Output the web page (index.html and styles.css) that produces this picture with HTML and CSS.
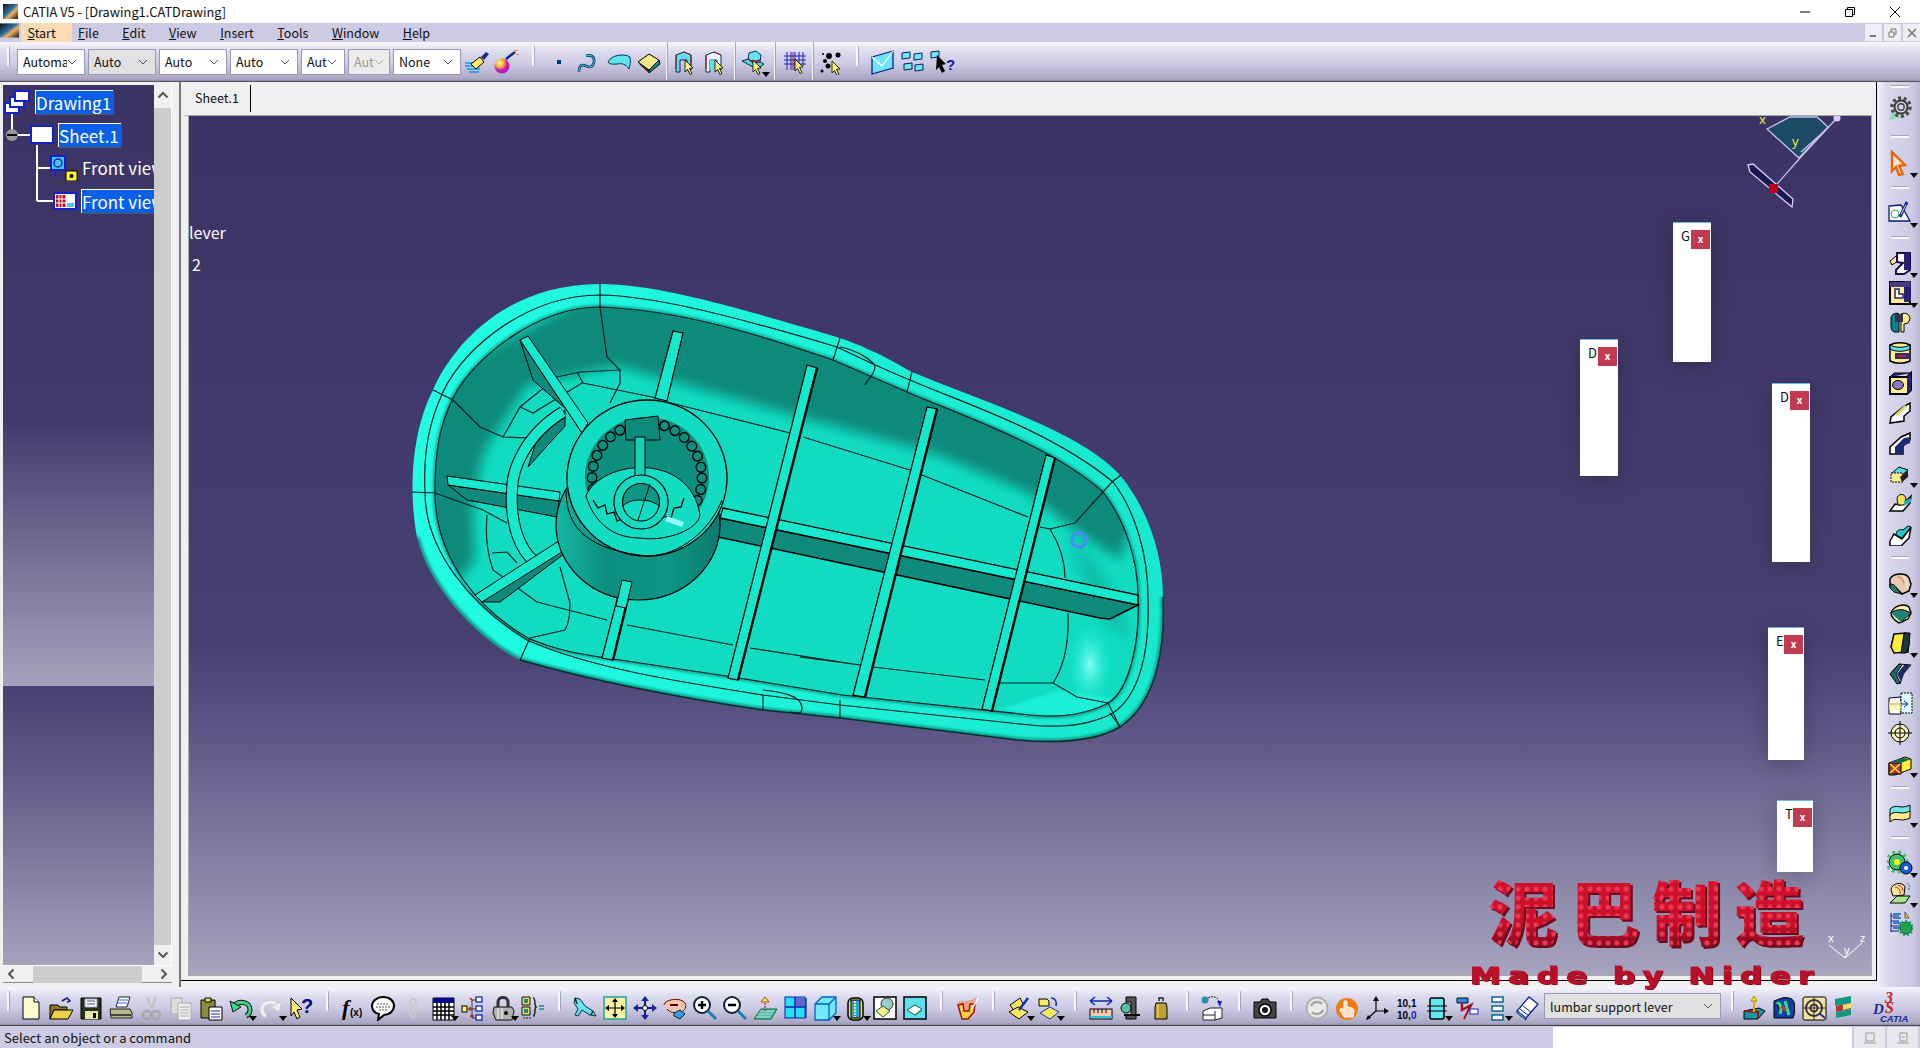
FILE: index.html
```html
<!DOCTYPE html>
<html lang="en">
<head>
<meta charset="utf-8">
<title>CATIA V5 - [Drawing1.CATDrawing]</title>
<link rel="stylesheet" href="styles.css">
</head>
<body>
<svg class="defs" aria-hidden="true">
<defs>
<linearGradient id="logoG" x1="0" y1="0" x2="1" y2="1"><stop offset="0" stop-color="#111"/><stop offset=".45" stop-color="#2c6f9c"/><stop offset=".62" stop-color="#f6b15a"/><stop offset="1" stop-color="#111"/></linearGradient>
<radialGradient id="ballG" cx=".35" cy=".3"><stop offset="0" stop-color="#fff2a0"/><stop offset=".55" stop-color="#f2b52a"/><stop offset="1" stop-color="#c318c0"/></radialGradient>
<linearGradient id="wallG" x1="0" x2="1"><stop offset="0" stop-color="#12b8a4"/><stop offset=".3" stop-color="#0c8f80"/><stop offset=".7" stop-color="#0d9585"/><stop offset="1" stop-color="#0b7a6e"/></linearGradient>
<linearGradient id="bandG" x1="0" y1="0" x2="1" y2="0"><stop offset="0" stop-color="#22fde4"/><stop offset=".5" stop-color="#1cf3d9"/><stop offset="1" stop-color="#17e8ce"/></linearGradient>
<radialGradient id="glowG"><stop offset="0" stop-color="#7ffff2"/><stop offset="1" stop-color="#14ecd2" stop-opacity="0"/></radialGradient>
<filter id="blur6"><feGaussianBlur stdDeviation="6"/></filter>
<filter id="blur2"><feGaussianBlur stdDeviation="1.400"/></filter>
<clipPath id="floorClip"><path d="M600 307C680 310 760 335 833 360L907 392C960 415 1050 445 1103 492C1125 520 1138 560 1138 597C1140 640 1130 690 1108 703C1080 718 1050 717 1030 715L843 695L733 677L607 658C580 654 555 650 528 638C480 610 435 560 435 492C435 450 440 425 453 398C475 355 540 307 600 307Z"/></clipPath>
<clipPath id="bodyClip"><path d="M600 284C650 285 700 296 840 338C880 352 900 366 912 372C960 392 1020 412 1067 437C1090 449 1108 462 1120 475C1145 505 1163 550 1163 597C1165 640 1160 700 1120 727C1090 745 1040 742 1017 740L840 718L763 710C680 698 590 680 520 660C480 640 430 590 417 537C408 490 412 430 433 390C455 340 510 284 600 284Z"/></clipPath>

<g id="cur"><path d="M0 0l8 8-3.500 .5 2.500 5-2 1-2.500-5L0 12z" fill="#ffee70" stroke="#000" stroke-width=".8"/></g>
<g id="brush"><path d="M1 14h13M1 17h15M3 20h13M5 23h10" stroke="#0a9cf0" stroke-width="1.500"/><path d="M7 15l9-7 4 5-8 7z" fill="#ffee66" stroke="#000"/><path d="M17 8l5-5 3 2-5 6z" fill="#103080"/></g>
<g id="ball"><circle cx="8" cy="17" r="7.500" fill="url(#ballG)"/><path d="M12 10l9-7" stroke="#102a80" stroke-width="2.500"/><path d="M20 2l4-1M22 5l3 1" stroke="#f08030"/></g>
<g id="pt"><rect x="11" y="11" width="4" height="4" fill="#003a70"/></g>
<g id="crv"><path d="M3 23c0-7 3-8 7-6s7 1 8-4-3-8-8-6" fill="none" stroke="#003a70" stroke-width="2.600"/><path d="M3 23c0-7 3-8 7-6s7 1 8-4-3-8-8-6" fill="none" stroke="#4fd6e8" stroke-width="1"/></g>
<g id="srf"><path d="M2 13C5 6 18 4 24 8c1 4 0 9-1 12-3-5-8-6-11-5-4 0-8 1-10-2z" fill="#5fe4f0" stroke="#06304a"/></g>
<g id="sld"><path d="M2 13l11-8 10 6-10 10z" fill="#f7e88a" stroke="#000"/><path d="M13 21l10-10 1 4-11 9z" fill="#0f8a8a" stroke="#000"/><path d="M2 13l11 8v3L4 16z" fill="#222"/></g>
<g id="wa"><path d="M4 6l8-3 7 3v15h-4V11h-7v12H4z" fill="#5fdde8" stroke="#063050"/><path d="M12 3l7 3v12M4 6v14" fill="none" stroke="#a01020"/><use href="#cur" x="13" y="11"/></g>
<g id="wb"><path d="M4 6l8-3 7 3v15h-4V11h-7v12H4z" fill="#f4f4ff" stroke="#063050"/><path d="M12 3l7 3M4 6v14" fill="none" stroke="#a01020"/><path d="M8 11h7v10H8z" fill="#5fdde8"/><use href="#cur" x="13" y="11"/></g>
<g id="asy"><path d="M1 12l10-3 12 6-7 5z" fill="#55d6e2" stroke="#063050"/><path d="M8 4l7-2 5 4-1 7-7 1-5-4z" fill="#66e4ee" stroke="#063050"/><path d="M7 10c4 3 8 3 12 1" fill="none" stroke="#a01020" stroke-width="1.500"/><use href="#cur" x="12" y="11"/></g>
<g id="grd"><path d="M5 3v18M9 3v18M13 3v18M17 3v18M21 3v14M2 7h22M2 11h22M2 15h22" stroke="#1a20c0"/><path d="M11 3v18" stroke="#c01020"/><use href="#cur" x="13" y="10"/></g>
<g id="sct"><circle cx="11" cy="7" r="3"/><circle cx="20" cy="6" r="2.500"/><circle cx="7" cy="12" r="2"/><circle cx="10" cy="17" r="2.500"/><circle cx="4" cy="22" r="1.500"/><circle cx="5" cy="5" r="1"/><use href="#cur" x="14" y="12"/></g>
<g id="env"><path d="M2 8l21-6v17L2 25z" fill="#6fe6f2" stroke="#0a1aa8" stroke-width="1.300"/><path d="M2 8l10 9 11-15" fill="none" stroke="#fff" stroke-width="1.200"/></g>
<g id="grp"><g fill="#6fe6f2" stroke="#06206a"><path d="M2 4l8-1v6l-8 1zM14 5l8-1v6l-8 1zM4 15l8-1v6l-8 1zM15 16l8-1v6l-8 1z"/></g></g>
<g id="hlp"><path d="M1 3l8-1v6l-8 1z" fill="#6fe6f2" stroke="#06206a"/><path d="M7 6l9 9-4 1 3 6-3 2-3-6-3 3z"/><text x="16" y="21" class="qm">?</text></g>
<g id="new"><path d="M5 2h11l5 5v17H5z" fill="#fffbd0" stroke="#000"/><path d="M16 2v5h5" fill="#fff" stroke="#000"/></g>
<g id="opn"><path d="M2 10h8l2 2h7v3H6L2 24z" fill="#8c7414" stroke="#000"/><path d="M6 15h19l-5 9H2z" fill="#f1cf45" stroke="#000"/><path d="M14 6l5-3 3 3-3 1" fill="none" stroke="#0e1a80" stroke-width="1.500"/></g>
<g id="sav"><path d="M3 3h20v21H3z" fill="#28301c" stroke="#000"/><path d="M7 4h12v8H7z" fill="#fff" stroke="#9ab"/><path d="M9 6h8M9 9h8" stroke="#44a"/><path d="M7 16h13v8H7z" fill="#e8e8a0"/><rect x="15" y="18" width="3" height="5"/></g>
<g id="prt"><path d="M8 12l3-10h11l-3 10z" fill="#fff" stroke="#223"/><path d="M11 5h9M10 8h9" stroke="#36f"/><path d="M2 14h20l2 4v5H3z" fill="#b8b888" stroke="#222"/><path d="M3 20h20" stroke="#444" stroke-width="2"/></g>
<g id="cut"><path d="M9 2l5 13M18 2l-5 13" stroke="#c4c4c4" stroke-width="2.500"/><circle cx="9" cy="20" r="4" fill="none" stroke="#a8a8a8" stroke-width="2.500"/><circle cx="18" cy="20" r="4" fill="none" stroke="#a8a8a8" stroke-width="2.500"/></g>
<g id="cpy" fill="#ddd" stroke="#aaa"><path d="M3 3h11v16H3z"/><path d="M10 8h13v17H10z" fill="#eee"/><path d="M12 12h9M12 15h9M12 18h9M12 21h9" stroke="#aaa"/></g>
<g id="pst"><path d="M3 5h14v18H3z" fill="#8c8a40" stroke="#000"/><path d="M7 3h6v4H7z" fill="#e8d24a" stroke="#000"/><path d="M11 12h13v13H11z" fill="#fff" stroke="#000"/><path d="M13 16h9M13 19h9M13 22h9" stroke="#22a" /></g>
<g id="und"><path d="M5 12c5-7 17-6 17 3 0 3-2 5-4 6" fill="none" stroke="#111" stroke-width="5"/><path d="M5 12c5-7 17-6 17 3 0 3-2 5-4 6" fill="none" stroke="#42d08a" stroke-width="3"/><path d="M2 6l3 11 8-5z" fill="#42d08a" stroke="#111"/></g>
<g id="red"><path d="M21 12c-5-7-17-6-17 3 0 3 2 5 4 6" fill="none" stroke="#ccc" stroke-width="5"/><path d="M21 12c-5-7-17-6-17 3 0 3 2 5 4 6" fill="none" stroke="#f0f0f6" stroke-width="3"/><path d="M24 6l-3 11-8-5z" fill="#eee" stroke="#ccc"/></g>
<g id="wht"><path d="M3 3l11 11-5 1 3 7-3 2-3-7-3 4z" fill="#ffee70" stroke="#000"/><text x="13" y="18" class="qm big">?</text></g>
<g id="fx"><text x="2" y="20" class="fx">f</text><text x="10" y="21" class="fx2">(x)</text></g>
<g id="bub"><path d="M13 2c7 0 11 4 11 9s-5 9-10 9l-6 5 1-6c-4-1-7-4-7-8 0-5 5-9 11-9z" fill="#fff" stroke="#000" stroke-width="2"/><path d="M7 9h12M6 12h14M9 15h8" stroke="#555" stroke-dasharray="2 1"/></g>
<g id="pwn" fill="none" stroke="#c8c8c8" stroke-width="2"><ellipse cx="13" cy="8" rx="3" ry="4"/><ellipse cx="13" cy="17" rx="3" ry="5"/></g>
<g id="tbl"><path d="M3 3h21v22H3z" fill="#fff" stroke="#000"/><path d="M3 3h21v5H3z" fill="#06088a"/><path d="M3 12h21M3 16h21M3 20h21M7 8v17M11 8v17M15 8v17M19 8v17" stroke="#000" stroke-width="1.500"/></g>
<g id="tre"><g fill="#fff" stroke="#0a28c0" stroke-width="1.300"><rect x="16" y="2" width="6" height="5"/><rect x="16" y="11" width="6" height="5"/><rect x="16" y="20" width="6" height="5"/></g><rect x="2" y="11" width="5" height="6" fill="#ffee70" stroke="#000"/><path d="M7 14h9M12 5v18M12 5h4M12 23h4" stroke="#333"/><path d="M10 3l2 2M10 12v4M10 21h4" stroke="#d01010" stroke-width="1.500"/></g>
<g id="lck"><path d="M8 12V7c0-6 10-6 10 0v5" fill="none" stroke="#333" stroke-width="3"/><path d="M4 12h18l2 4-2 9H6l-3-7z" fill="#b0b0b0" stroke="#111"/><path d="M8 13v11M12 13v11" stroke="#fff"/><circle cx="16" cy="18" r="2"/></g>
<g id="frm"><path d="M2 2h8v8H2zM2 12h8v8H2z" fill="#e8e06a" stroke="#111"/><path d="M4 4h4v4H4zM4 14h4v4H4z" fill="#2a8a78"/><path d="M3 23h2M6 23h2M9 23h2" stroke="#222"/><path d="M13 3c3 0 1 8 3 9-2 1 0 9-3 9" fill="none" stroke="#222" stroke-width="1.500"/><path d="M19 11h5M19 14h5" stroke="#1a8a80" stroke-width="1.500"/></g>
<g id="pln"><path d="M3 3l5 1 5 7 8 5 3 5-6-1-8-5-4 6-3-1 3-6-4-6z" fill="#68e2ee" stroke="#06304a"/><path d="M3 3l2 6M21 16l-2 4" stroke="#222" stroke-width="1.500"/></g>
<g id="fit"><rect x="2" y="2" width="22" height="22" fill="#f8f2a4" stroke="#16a8a0" stroke-width="1.500"/><path d="M13 5v16M5 13h16" stroke="#000" stroke-width="1.200"/><path d="M13 3l3 4h-6zM13 23l3-4h-6zM3 13l4-3v6zM23 13l-4-3v6z"/></g>
<g id="pan"><path d="M13 2v22M2 13h22" stroke="#0a1aa0" stroke-width="2"/><path d="M13 1l4 5H9zM13 25l4-5H9zM1 13l5-4v8zM25 13l-5-4v8z" fill="#1a2a90"/><circle cx="13" cy="13" r="2.500" fill="#fff" stroke="#000"/></g>
<g id="rot"><path d="M2 10c1-6 17-8 21-2 2 3 0 8-4 9-6 2-12 0-14-3" fill="#f4c8b0" stroke="#700" /><path d="M8 10h8" stroke="#400" stroke-width="2"/><path d="M12 18l6-3 5 4-5 5-6-3z" fill="#3aa0d8" stroke="#024"/></g>
<g id="zin"><circle cx="10" cy="10" r="8" fill="#fff" stroke="#123" stroke-width="2"/><path d="M6 10h8M10 6v8" stroke="#000" stroke-width="2.500"/><path d="M16 16l8 8" stroke="#1a7fb0" stroke-width="3"/></g>
<g id="zot"><circle cx="10" cy="10" r="8" fill="#fff" stroke="#123" stroke-width="2"/><path d="M6 10h8" stroke="#000" stroke-width="2.500"/><path d="M16 16l8 8" stroke="#1a7fb0" stroke-width="3"/></g>
<g id="nrm"><path d="M2 24l7-10h16l-6 10z" fill="#5cc0b0" stroke="#063"/><path d="M4 22h14M6 19h14M8 16h14" stroke="#9ee0d0"/><path d="M13 16V4" stroke="#c24" stroke-dasharray="2 1" stroke-width="1.300"/><path d="M13 2l4 5H9z" fill="#ffee70" stroke="#a40"/></g>
<g id="mul"><rect x="5" y="3" width="20" height="20" fill="#5a5aa0"/><rect x="3" y="2" width="20" height="21" fill="#28e0f0" stroke="#0a1ac0"/><path d="M13 2v21M3 12h20" stroke="#0a1ac0" stroke-width="1.500"/><path d="M14 3h8v8h-8z" fill="#6a60c0"/></g>
<g id="cub"><path d="M3 9l7-7h14v16l-7 7H3z" fill="#6feaf6" stroke="#0a5ac8" stroke-width="1.300"/><path d="M3 9h14v16M17 9l7-7" fill="none" stroke="#0a5ac8" stroke-width="1.300"/></g>
<g id="cyl"><rect x="6" y="3" width="15" height="22" rx="5" fill="#eee060" stroke="#000" stroke-width="1.500"/><rect x="9" y="5" width="9" height="18" fill="#28a0f0" stroke="#000"/><path d="M13 6v16" stroke="#fff200" stroke-dasharray="2 1" stroke-width="2"/></g>
<g id="rn1"><rect x="2" y="2" width="22" height="22" fill="#fff" stroke="#000" stroke-width="1.500"/><circle cx="15" cy="9" r="6" fill="#9cc" stroke="#333"/><path d="M4 16l7-5 7 5-7 6z" fill="#f6ee8a" stroke="#163"/></g>
<g id="rn2"><rect x="2" y="2" width="22" height="22" fill="#5fe0f0" stroke="#000" stroke-width="1.500"/><path d="M5 15l8-5 7 4-7 6z" fill="#fff" stroke="#163"/><path d="M13 20l7-6v2l-7 5z" fill="#1a7"/></g>
<g id="mtl"><path d="M3 7l14-2 6-3-3 13-6 10H9l-3-9z" fill="#e8a090"/><path d="M4 10l5-1 1 7h5l1-7h5l-1 8-6 7H8z" fill="#ffd040" stroke="#a01010" stroke-width="1.500"/><path d="M18 14L24 3" stroke="#fff" stroke-width="1.500"/></g>
<g id="shp"><path d="M4 10l10-7 3 6-8 8z" fill="#f8e860" stroke="#000"/><path d="M3 17l9-5 10 5-9 7z" fill="#f8e860" stroke="#000"/><path d="M13 15l9-12" stroke="#1030b0" stroke-width="2.500"/></g>
<g id="shq"><path d="M3 4h8l2 2v5H3z" fill="#f8e860" stroke="#000"/><path d="M4 18l10-6 9 5-9 7z" fill="#f8e860" stroke="#1030b0"/><path d="M15 3c4 0 6 3 5 8" fill="none" stroke="#1030b0" stroke-width="1.500"/></g>
<g id="rul"><path d="M2 6h22M2 6l5-4M2 6l5 4M24 6l-5-4M24 6l-5 4" fill="none" stroke="#0a28b0" stroke-width="1.500"/><rect x="2" y="14" width="22" height="10" fill="#f8c8b0" stroke="#000"/><path d="M2 22h22" stroke="#20c8e0" stroke-width="2"/><path d="M6 14v4M10 14v4M14 14v4M18 14v4" stroke="#000"/></g>
<g id="clm"><path d="M8 2h10v22H8v-4h5V7H8z" fill="#555" stroke="#000"/><circle cx="8" cy="13" r="5" fill="#56c0a0" stroke="#000"/><path d="M6 20h16" stroke="#000" stroke-width="2"/></g>
<g id="wgt"><path d="M11 6V3h4v3" fill="none" stroke="#222" stroke-width="1.500"/><path d="M8 8h10l1 4v12H7V12z" fill="#c0a030" stroke="#000"/><path d="M10 9v14" stroke="#f0e090"/></g>
<g id="kin"><path d="M3 16l7-3 12 0v10l-7 2H3z" fill="#fff" stroke="#222"/><path d="M3 20h12M15 16v9" stroke="#222"/><circle cx="5" cy="5" r="3.500" fill="#2a8aa8"/><path d="M8 3c4-2 9-2 11 3" fill="none" stroke="#222" stroke-dasharray="2 1"/><path d="M17 6l5 0-2 6z" fill="#1a20c0"/></g>
<g id="cam"><path d="M2 7h6l2-3h6l2 3h6v16H2z" fill="#444" stroke="#000"/><circle cx="13" cy="15" r="6" fill="#fff" stroke="#000" stroke-width="1.500"/><circle cx="13" cy="15" r="3" fill="#111"/></g>
<g id="upd"><circle cx="13" cy="13" r="10.500" fill="#eaeaea" stroke="#b0b0b0" stroke-width="2"/><path d="M7 11c2-5 9-5 11-2M19 15c-2 5-9 5-11 2" fill="none" stroke="#a8a8a8" stroke-width="2.500"/></g>
<g id="hnd"><circle cx="13" cy="14" r="11" fill="#f07a10"/><path d="M10 7c0-2 3-2 3 0v5l5 1c3 1 2 5 1 9H10l-4-7c0-2 2-2 4 0z" fill="#fbe0c8" stroke="#fff"/></g>
<g id="axi"><path d="M12 16V3M12 16h11M12 16l-9 8" stroke="#000" stroke-width="1.200"/><path d="M12 1l3 5H9zM25 16l-5-3v6zM2 25l2-5 3 3z" fill="#000"/></g>
<g id="num"><text x="3" y="12" class="nm">10,1</text><text x="3" y="24" class="nm">10,<tspan class="nmb">0</tspan></text></g>
<g id="dsp"><rect x="6" y="3" width="14" height="21" rx="2" fill="#66e6f0" stroke="#000" stroke-width="1.500"/><path d="M3 11h20M3 16h20" stroke="#000"/></g>
<g id="spc"><path d="M3 3h11v5H3z" fill="#2c8ae0" stroke="#111"/><path d="M8 8v7l9-5-3 6" fill="none" stroke="#a01020" stroke-width="2.500"/><path d="M14 16l-4 8" stroke="#a01020" stroke-width="2"/><rect x="16" y="14" width="8" height="5" fill="#fff" stroke="#0a28c0"/></g>
<g id="lay"><g fill="#fff" stroke="#0a6a90" stroke-width="1.500"><rect x="8" y="2" width="11" height="5"/><rect x="8" y="11" width="11" height="5"/><rect x="8" y="20" width="11" height="5"/></g></g>
<g id="bok"><path d="M3 16L15 2l9 7-12 14z" fill="#fff" stroke="#0a2a90" stroke-width="1.300"/><path d="M3 16l9 7v2L3 18zM6 14l9 7M9 11l8 6" fill="#7fd0f0" stroke="#0a2a90"/></g>
<g id="edg"><path d="M3 16l15-3 6 3-7 8H3z" fill="#0f9aa8" stroke="#000"/><path d="M3 16l14 1v7" fill="none" stroke="#a01010" stroke-width="2"/><path d="M13 3v14" stroke="#e8a010" stroke-width="2"/><path d="M13 1l3 5h-6z" fill="#fff000" stroke="#a80"/></g>
<g id="cnt"><path d="M3 6l8-3c5-1 11 0 12 4 1 6 1 12-1 16H3z" fill="#0f3fa0" stroke="#000"/><path d="M6 9c3-3 5 5 3 10M14 6l4 14" stroke="#2ee08a" stroke-width="3"/><path d="M11 11l3 5" stroke="#f02020" stroke-width="3"/></g>
<g id="trg"><rect x="2" y="2" width="23" height="23" rx="2" fill="#f5e2a8" stroke="#000"/><circle cx="13" cy="13" r="8" fill="none" stroke="#333" stroke-width="2"/><circle cx="13" cy="13" r="3.500" fill="none" stroke="#333" stroke-width="2"/><path d="M13 2v23M2 13h23" stroke="#333"/><path d="M18 18l6 5" stroke="#1a30b0" stroke-width="2"/></g>
<g id="lyr"><path d="M4 4l16-3v7L4 11z" fill="#0f9a80"/><path d="M5 11l15-3v6L5 17z" fill="#c03030"/><path d="M5 17l15-3v6L5 23z" fill="#0f9a80"/><path d="M12 10l8-2v5l-8 2z" fill="#f0e070"/></g>
<g id="gear"><path d="M2 26l4-10 9 7z" fill="#8bd8b4"/><circle cx="14" cy="13" r="6.500" fill="#d8d8e8" stroke="#3a3a3a" stroke-width="2"/><circle cx="14" cy="13" r="9" fill="none" stroke="#4a4a4a" stroke-width="3.500" stroke-dasharray="3 2.600"/><circle cx="14" cy="13" r="3.200" fill="none" stroke="#3a3a3a" stroke-width="1.400"/></g>
<g id="arw"><path d="M5 2l13 13-6 1 4 8-4 1-3-8-4 4z" fill="#fbe6c8" stroke="#e8650a" stroke-width="2.400"/></g>
<g id="skt"><path d="M2 6l12-1 9 16H2z" fill="#fff" stroke="#0a1a80" stroke-width="1.300"/><circle cx="8" cy="14" r="4" fill="none" stroke="#2ab060"/><path d="M13 17l7-15" stroke="#1030a0" stroke-width="3"/><path d="M14 14l5-9" stroke="#f0e070"/></g>
<g id="pad"><path d="M3 11l6-5 2 5-6 4z" fill="#ffef90" stroke="#000"/><path d="M10 3h13v17l-6 4H9v-4l7-7-6-1z" fill="#fff" stroke="#160a50" stroke-width="2"/><path d="M17 3h6v17h-6z" fill="#2c1e70"/></g>
<g id="pck"><rect x="3" y="2" width="20" height="22" fill="#ffef90" stroke="#000" stroke-width="2"/><path d="M17 1h7v21h-7z" fill="#2c1e70"/><path d="M3 2h20v5H3z" fill="#4a3a80"/><path d="M8 9v9h8v-4h-4V9z" fill="#fff" stroke="#2c1e70" stroke-width="1.500"/></g>
<g id="shf"><path d="M4 8c0-4 6-6 8-4v18H8c-3 0-4-3-4-6z" fill="#0f7f8a" stroke="#000"/><path d="M14 4c4-2 9 0 9 5l-2 4-4 1v8h-3z" fill="#ffef90" stroke="#000"/><path d="M8 4h8v8H8z" fill="#334"/></g>
<g id="rib"><path d="M3 5c5-3 15-3 20 0v16c-5 3-15 3-20 0z" fill="#ffef90" stroke="#000" stroke-width="1.500"/><path d="M3 5c5 3 15 3 20 0v4c-5 3-15 3-20 0z" fill="#5fe0f0" stroke="#000"/><path d="M8 13h15v6H8z" fill="#3a2a70"/><path d="M11 15h8v2h-8z" fill="#b02020"/></g>
<g id="hol"><path d="M3 7h17l4-4v17l-4 4H3z" fill="#ffef90" stroke="#000" stroke-width="2"/><path d="M20 7l4-4v17l-4 4z" fill="#2c1e70"/><path d="M3 7l4-4h17" fill="#2c1e70" stroke="#000"/><ellipse cx="11" cy="15" rx="5.500" ry="4.500" fill="#8a7ac0" stroke="#000"/></g>
<g id="rb1"><path d="M3 23l1-6 12-10 7-4v8l-6 5v5z" fill="#fff" stroke="#000" stroke-width="1.500"/><path d="M9 15l10-9" stroke="#e0d860" stroke-width="3"/></g>
<g id="rb2"><path d="M3 24v-7L14 7l9-4v7l-7 6v8z" fill="#fff" stroke="#000" stroke-width="1.500"/><path d="M8 17l9-9 6-1v6l-7 3v8h-8z" fill="#1a2a70"/></g>
<g id="mlt"><path d="M4 14l8-7 9 3-8 7z" fill="#56d8e8" stroke="#000"/><rect x="4" y="13" width="12" height="9" fill="#ffef90" stroke="#000" stroke-dasharray="2 1"/><path d="M13 17l8-7v7l-6 5z" fill="#222"/></g>
<g id="lft"><path d="M3 21l5-7 5 1 8-6 3-3-1 7-7 8H4z" fill="#fff" stroke="#000" stroke-width="1.500"/><path d="M10 9c0-5 8-7 9 0l-2 6H11z" fill="#f5e060" stroke="#000"/><path d="M17 11l7-3v4l-7 4z" fill="#28b0b0"/></g>
<g id="swp"><path d="M3 21l4-7 8 5 9-12-2 11-8 8H3z" fill="#fff" stroke="#000" stroke-width="1.500"/><path d="M9 15c0-5 4-6 7-5l5-4 3 1-6 7-3 4z" fill="#28c8c8" stroke="#000"/></g>
<g id="sf1"><path d="M3 9c3-6 16-7 19-1l2 6-2 7-7 3-5-5-7-3z" fill="#e8ccb0" stroke="#000" stroke-width="1.500"/><path d="M3 14c5 0 7 4 7 5l5 5-8-2-4-4z" fill="#2a7a6c" stroke="#000"/><path d="M16 6c3 3 5 8 4 12" fill="none" stroke="#fff"/><path d="M11 7c3 0 5 3 6 6" fill="none" stroke="#d06020"/></g>
<g id="sf2"><path d="M4 13c3-8 14-10 18-6l2 6-3 6-9 4c-5-3-8-6-8-10z" fill="#ffefb0" stroke="#000" stroke-width="1.500"/><path d="M4 13c4-3 9-4 13-3l7 3c-3 4-7 4-9 10" fill="#1f8478" stroke="#000"/></g>
<g id="sf3"><path d="M7 4l12-1 3 6-1 13-14 1-3-6z" fill="#ffef3a" stroke="#000" stroke-width="1.500"/><path d="M17 3h6l-1 13-3 7h-5z" fill="#1a3a3a" stroke="#000"/></g>
<g id="sf4"><path d="M3 14l9-10 12 1-8 9-3 10z" fill="#fff" stroke="#000"/><path d="M3 14l9-10 3 1-6 9 4 9-3 1z" fill="#1a6a72" stroke="#000"/><path d="M10 14l7-9 6 0-6 9-3 8z" fill="#1c2a60"/></g>
<g id="sf5"><path d="M2 8l12-1v17H2z" fill="#fff" stroke="#000"/><path d="M14 3h11v20H14z" fill="#dff" stroke="#000" stroke-dasharray="2 1"/><path d="M3 14h17M17 11l4 3-4 3" fill="none" stroke="#0a1ac0"/><path d="M2 12h12v8H2z" fill="#ffef90" opacity=".7"/></g>
<g id="sf6"><circle cx="13" cy="13" r="9" fill="#f8f4c0" stroke="#000"/><circle cx="13" cy="13" r="5" fill="none" stroke="#000"/><path d="M13 1v24M1 13h24" stroke="#000"/></g>
<g id="sf7"><path d="M2 13l16-6 6 2v10L8 25H2z" fill="#ffef3a" stroke="#000"/><path d="M2 13h12v11H2z" fill="#c03030" stroke="#000"/><path d="M3 14l10 9M13 14L3 23" stroke="#ffef3a" stroke-width="1.500"/><path d="M2 13l14-5 8 1-10 4z" fill="#0e6a50"/></g>
<g id="sf8"><path d="M3 9c6-6 10 1 20-4v7c-10 5-14-2-20 4z" fill="#6fe6ea" stroke="#000"/><path d="M3 15c6-6 10 1 20-4v7c-10 5-14-2-20 4z" fill="#ffef90" stroke="#000"/></g>
<g id="ga1"><circle cx="10" cy="12" r="8" fill="#3ec070" stroke="#000"/><circle cx="10" cy="12" r="10" fill="none" stroke="#3ec070" stroke-width="3" stroke-dasharray="3 3"/><circle cx="10" cy="12" r="3" fill="#ff0"/><circle cx="19" cy="18" r="6" fill="#1a5ad8" stroke="#000"/><circle cx="19" cy="18" r="2" fill="#fff"/></g>
<g id="ga2"><path d="M4 10c0-7 12-9 14-3l-1 8-11 1z" fill="#f9e79a" stroke="#000"/><path d="M8 7c3 0 6 3 5 7M11 5c3 1 5 3 5 6" fill="none" stroke="#c02020"/><path d="M3 23l7-7 13 0-5 7z" fill="#a8e090" stroke="#000"/><path d="M20 3c3 2 3 5 1 8" fill="none" stroke="#1a6fd0" stroke-dasharray="2 1"/></g>
<g id="ga3"><path d="M4 3v19M4 6h8M4 11h8M4 16h8M4 21h8" stroke="#0a1a90"/><path d="M6 4h8M6 8h8M6 13h8M6 18h8" stroke="#0a60c0" stroke-width="1.500"/><circle cx="19" cy="18" r="6" fill="#22a050" stroke="#063"/><circle cx="19" cy="18" r="7" fill="none" stroke="#22a050" stroke-dasharray="2 2" stroke-width="2"/><path d="M18 2v6h4z" fill="#f5e000" stroke="#555"/></g>
</defs>
</svg>

<div class="app">
  <header class="title-bar">
    <svg class="app-logo" viewBox="0 0 16 16"><rect width="16" height="16" fill="url(#logoG)"/></svg>
    <span class="title-text">CATIA V5 - [Drawing1.CATDrawing]</span>
    <div class="win-btns">
      <svg viewBox="0 0 12 12"><path d="M1 6h10" stroke="#000"/></svg>
      <svg viewBox="0 0 12 12"><path d="M1.500 3.500h7v7h-7zM3.500 3.500v-2h7v7h-2" fill="none" stroke="#000"/></svg>
      <svg viewBox="0 0 12 12"><path d="M1 1l10 10M11 1L1 11" stroke="#000"/></svg>
    </div>
  </header>

  <nav class="menu-bar">
    <svg class="menu-logo" viewBox="0 0 19 14"><rect width="19" height="14" fill="url(#logoG)"/></svg>
    <span class="menu-start"><u>S</u>tart</span>
    <span><u>F</u>ile</span><span><u>E</u>dit</span><span><u>V</u>iew</span><span><u>I</u>nsert</span><span><u>T</u>ools</span><span><u>W</u>indow</span><span><u>H</u>elp</span>
    <div class="mdi-btns">
      <span class="mdi"><svg viewBox="0 0 10 10"><path d="M1 8h6" stroke="#777" stroke-width="2"/></svg></span>
      <span class="mdi"><svg viewBox="0 0 10 10"><path d="M1 4h5v5H1zM3 4V1h5v5H6" fill="none" stroke="#777"/></svg></span>
      <span class="mdi"><svg viewBox="0 0 10 10"><path d="M1 1l8 8M9 1L1 9" stroke="#777" stroke-width="1.600"/></svg></span>
    </div>
  </nav>

  <div class="toolbar toolbar-top">
    <i class="handle"></i>
    <div class="combo c68"><span class="clip">Automa</span><svg class="chev" viewBox="0 0 10 6"><path d="M1 1l4 4 4-4" fill="none" stroke="#555"/></svg></div>
    <div class="combo c68 grey"><span>Auto</span><svg class="chev" viewBox="0 0 10 6"><path d="M1 1l4 4 4-4" fill="none" stroke="#555"/></svg></div>
    <div class="combo c68"><span>Auto</span><svg class="chev" viewBox="0 0 10 6"><path d="M1 1l4 4 4-4" fill="none" stroke="#555"/></svg></div>
    <div class="combo c68"><span>Auto</span><svg class="chev" viewBox="0 0 10 6"><path d="M1 1l4 4 4-4" fill="none" stroke="#555"/></svg></div>
    <div class="combo c44"><span>Aut</span><svg class="chev" viewBox="0 0 10 6"><path d="M1 1l4 4 4-4" fill="none" stroke="#555"/></svg></div>
    <div class="combo c42 off"><span>Aut</span><svg class="chev" viewBox="0 0 10 6"><path d="M1 1l4 4 4-4" fill="none" stroke="#aaa"/></svg></div>
    <div class="combo c68 last"><span>None</span><svg class="chev" viewBox="0 0 10 6"><path d="M1 1l4 4 4-4" fill="none" stroke="#555"/></svg></div>
    <span class="tool"><svg viewBox="0 0 26 26"><use href="#brush"/></svg></span>
    <span class="tool"><svg viewBox="0 0 26 26"><use href="#ball"/></svg></span>
    <i class="handle"></i>
    <span class="tool"><svg viewBox="0 0 26 26"><use href="#pt"/></svg></span>
    <span class="tool"><svg viewBox="0 0 26 26"><use href="#crv"/></svg></span>
    <span class="tool"><svg viewBox="0 0 26 26"><use href="#srf"/></svg></span>
    <span class="tool"><svg viewBox="0 0 26 26"><use href="#sld"/></svg></span>
    <i class="thin"></i>
    <span class="tool"><svg viewBox="0 0 26 26"><use href="#wa"/></svg></span>
    <span class="tool"><svg viewBox="0 0 26 26"><use href="#wb"/></svg></span>
    <i class="thin w3"></i>
    <span class="tool dd"><svg viewBox="0 0 26 26"><use href="#asy"/></svg></span>
    <i class="thin w5"></i>
    <span class="tool"><svg viewBox="0 0 26 26"><use href="#grd"/></svg></span>
    <i class="thin"></i>
    <span class="tool"><svg viewBox="0 0 26 26"><use href="#sct"/></svg></span>
    <i class="handle"></i>
    <span class="tool"><svg viewBox="0 0 26 26"><use href="#env"/></svg></span>
    <span class="tool"><svg viewBox="0 0 26 26"><use href="#grp"/></svg></span>
    <span class="tool"><svg viewBox="0 0 26 26"><use href="#hlp"/></svg></span>
  </div>

  <main class="main">
    <aside class="left">
      <div class="tree">
        <svg class="tree-lines" viewBox="0 0 151 150"><path d="M9 25v25M9 50h20M34 60v56M34 83h14M34 116h16" fill="none" stroke="#fff" stroke-width="2"/><circle cx="9" cy="50" r="6" fill="#999"/><path d="M4 50h10" stroke="#000" stroke-width="2"/></svg>
        <div class="node n0"><svg class="n-ic" viewBox="0 0 26 26"><path d="M1 14h14v10H1z" fill="#fff" stroke="#1420d0" stroke-width="2"/><path d="M6 8h14v10H6z" fill="#fff" stroke="#1420d0" stroke-width="2"/><path d="M11 2h14v10H11z" fill="#fff" stroke="#1420d0" stroke-width="2"/></svg><span class="sel">Drawing1</span></div>
        <div class="node n1"><svg class="n-ic" viewBox="0 0 24 20"><rect x="1" y="1" width="22" height="17" fill="#fff" stroke="#1420d0" stroke-width="2"/></svg><span class="sel">Sheet.1</span></div>
        <div class="node n2"><svg class="n-ic" viewBox="0 0 28 26"><rect x="1" y="1" width="14" height="14" fill="#40c8f0" stroke="#1420d0" stroke-width="2"/><circle cx="8" cy="8" r="4" fill="none" stroke="#1420d0" stroke-width="1.500"/><path d="M5 17v4h6" fill="none" stroke="#1420d0"/><rect x="16" y="16" width="11" height="10" fill="#ffff30" stroke="#000"/><circle cx="21.500" cy="21" r="2"/></svg><span class="plain">Front view</span></div>
        <div class="node n3"><svg class="n-ic" viewBox="0 0 24 18"><rect x="1" y="1" width="22" height="16" fill="#fff" stroke="#1420d0" stroke-width="2"/><path d="M3 3h10v12H3z" fill="#c01030"/><path d="M6 3v12M9 3v12M3 7h18M3 11h18M13 3v12M17 3v8" stroke="#fff"/><path d="M14 11h7v4h-7z" fill="#48c8f8"/></svg><span class="sel">Front view</span></div>
      </div>
      <div class="vscroll">
        <svg class="sarrow" viewBox="0 0 12 8"><path d="M1.500 6.500L6 2l4.500 4.500" fill="none" stroke="#555" stroke-width="2"/></svg>
        <div class="vthumb"></div>
        <svg class="sarrow" viewBox="0 0 12 8"><path d="M1.500 1.500L6 6l4.500-4.500" fill="none" stroke="#555" stroke-width="2"/></svg>
      </div>
      <div class="hscroll">
        <svg class="sarrow-h" viewBox="0 0 8 12"><path d="M6.500 1.500L2 6l4.500 4.500" fill="none" stroke="#555" stroke-width="2"/></svg>
        <div class="hthumb"></div>
        <svg class="sarrow-h" viewBox="0 0 8 12"><path d="M1.500 1.500L6 6l-4.500 4.500" fill="none" stroke="#555" stroke-width="2"/></svg>
      </div>
    </aside>

    <section class="center">
      <div class="tabs"><span class="tab">Sheet.1</span></div>
      <div class="canvas">
        <svg class="scene" viewBox="189 116 1682 859">
          <!-- body -->
          <path d="M600 284C650 285 700 296 840 338C880 352 900 366 912 372C960 392 1020 412 1067 437C1090 449 1108 462 1120 475C1145 505 1163 550 1163 597C1165 640 1160 700 1120 727C1090 745 1040 742 1017 740L840 718L763 710C680 698 590 680 520 660C480 640 430 590 417 537C408 490 412 430 433 390C455 340 510 284 600 284Z" fill="url(#bandG)"/>
          <g clip-path="url(#bodyClip)">
            <path d="M1163 597C1165 640 1160 700 1120 727C1090 745 1040 742 1017 740L840 718L763 710C680 698 590 680 520 660C480 640 430 590 417 537" fill="none" stroke="#0c8f80" stroke-width="5" filter="url(#blur2)"/>
            <path d="M600 307C680 310 760 335 833 360L907 392C960 415 1050 445 1103 492C1125 520 1138 560 1138 597C1140 640 1130 690 1108 703C1080 718 1050 717 1030 715L843 695L733 677L607 658C580 654 555 650 528 638C480 610 435 560 435 492C435 450 440 425 453 398C475 355 540 307 600 307Z" fill="#0c9c8c" stroke="#0b9a8a" stroke-width="4" filter="url(#blur2)"/>
          </g>
          <path d="M1163 597C1165 640 1160 700 1120 727C1090 745 1040 742 1017 740L840 718L763 710C680 698 590 680 520 660" fill="none" stroke="#06302c" stroke-width="1.500"/>
          <g clip-path="url(#floorClip)">
            <rect x="420" y="290" width="740" height="440" fill="#11dcc2"/>
            <path d="M425 620L475 560L472 500L485 450L527 385L617 366L800 417L933 453L1027 492L1075 530L1120 560L1150 470L1000 380L600 290L430 380Z" fill="#0d8a7c" filter="url(#blur6)"/>
            <path d="M1070 530C1095 560 1120 590 1130 640L1100 620L1075 560Z" fill="#10c0aa" filter="url(#blur6)"/>
            <ellipse cx="1090" cy="665" rx="22" ry="42" fill="url(#glowG)"/>
            <path d="M1000 710L1060 690L1120 700L1100 720Z" fill="#1cf0d8" filter="url(#blur2)"/>
          </g>

          <!-- rim lines -->
          <g fill="none" stroke="#04201e" stroke-width="1.200">
            <path d="M600 295C650 296 720 312 837 347C860 358 890 372 910 380C960 402 1050 430 1113 482C1135 510 1148 555 1148 597C1150 650 1140 695 1113 713C1085 728 1050 727 1030 725L840 705L763 695C680 682 590 668 527 640C470 605 425 550 425 492C423 450 430 420 443 392C465 345 530 295 600 295Z"/>
            <path d="M600 307C680 310 760 335 833 360L907 392C960 415 1050 445 1103 492C1125 520 1138 560 1138 597C1140 640 1130 690 1108 703C1080 718 1050 717 1030 715L843 695L733 677L607 658C580 654 555 650 528 638C480 610 435 560 435 492C435 450 440 425 453 398C475 355 540 307 600 307Z"/>
            <path d="M600 284V307L607 357L620 370L620 383L610 403"/>
            <path d="M433 390L453 400L480 427L503 437L527 438"/>
            <path d="M503 437L520 407L557 377L580 372L620 370M520 407L533 413L582 383M577 372L583 383L657 398M667 402L790 433M803 437L910 470M922 475L1028 517"/>
            <path d="M1040 527L1050 529L1075 523L1112 482L1121 475M1050 529C1060 545 1065 560 1065 578"/>
            <path d="M1068 613C1069 640 1065 665 1053 683L1000 683M1053 683L1077 697L1108 703L1120 727"/>
            <path d="M800 657L860 665M873 667L985 680M537 602L607 620M627 625L733 645M750 648L860 665"/>
            <path d="M412 492L435 493L483 510L507 523M487 515C485 540 488 555 493 570L537 602M492 553L507 552L517 563"/>
            <path d="M560 567L570 603C570 615 568 625 565 630L530 638L520 660"/>
            <path d="M840 338L833 360M912 372L907 392M840 347C855 350 870 358 875 366C875 375 868 378 865 385M1110 713L1120 727"/>
            <path d="M763 695V710M763 690C780 692 802 695 802 708C802 716 795 712 790 712M840 700V718"/>
          </g>

          <!-- long rib -->
          <path d="M720 518L1138 605L1110 619L1100 618L718 537Z" fill="#0d8a7c" stroke="#000" stroke-width="1.500"/>
          <path d="M723 508L1138 595V605L720 518Z" fill="#16e8cd" stroke="#000" stroke-width="1.300"/>

          <!-- cross ribs -->
          <g fill="#16e8cd" stroke="#000" stroke-width="1.200">
            <path d="M807 365L817 368L738 680L728 678Z"/>
            <path d="M927 407L937 409L865 697L853 695Z"/>
            <path d="M1046 455L1055 458L992 711L982 709Z"/>
            <path d="M673 331L683 333L667 401L655 398Z"/>
            <path d="M622 580L632 582L613 660L602 658Z"/>
          </g>
          <g fill="none" stroke="#000" stroke-width="2.400">
            <path d="M817 368L738 680M937 409L865 697M1055 458L992 711M632 582L613 660"/>
          </g>

          <!-- left ribs -->
          <path d="M520 340L533 380L567 410L582 433Z" fill="#0d8a7c" stroke="#000"/>
          <path d="M520 340L528 336L588 423L582 433Z" fill="#16e8cd" stroke="#000"/>
          <path d="M448 485L467 500L510 508L557 517L559 501Z" fill="#0d8a7c" stroke="#000"/>
          <path d="M447 476L560 492L559 501L448 485Z" fill="#16e8cd" stroke="#000"/>
          <path d="M565 410L565 426L528 467L540 430Z" fill="#0d8a7c" stroke="#000"/>
          <path d="M563 412C525 435 512 470 512 490C510 525 520 550 535 562" fill="none" stroke="#000" stroke-width="12"/>
          <path d="M563 412C525 435 512 470 512 490C510 525 520 550 535 562" fill="none" stroke="#16e8cd" stroke-width="10"/>
          <path d="M482 602L500 602L572 548L568 535Z" fill="#0d8a7c" stroke="#000"/>
          <path d="M475 595L482 602L573 545L568 535Z" fill="#16e8cd" stroke="#000"/>

          <!-- hub -->
          <ellipse cx="638" cy="525" rx="82" ry="75" fill="url(#wallG)" stroke="#000" stroke-width="1.200"/>
          <path d="M622 580L632 582L626 608L616 606Z" fill="#16e8cd" stroke="#000"/>
          <ellipse cx="647" cy="478" rx="80" ry="78" fill="#12dcc2" stroke="#000" stroke-width="1.300"/>
          <path d="M566 490C566 530 590 550 647 556C680 556 710 530 722 500" fill="none" stroke="#000" stroke-width="1"/>
          <ellipse cx="647" cy="477" rx="62" ry="60" fill="#0d8f80"/>
          <circle cx="647" cy="478" r="55" fill="none" stroke="#000" stroke-width="11" stroke-linecap="round" stroke-dasharray=".1 11.420"/>
          <circle cx="647" cy="478" r="55" fill="none" stroke="#0d8f80" stroke-width="8" stroke-linecap="round" stroke-dasharray=".1 11.420"/>
          <path d="M586 496C600 460 690 450 700 515C698 530 665 542 640 538C615 538 595 525 586 496Z" fill="#12dcc2" stroke="#000"/>
          <path d="M593 500l5 8 7-3 2 9 7-2 3 9 7-3 5 8 7-6 7 7 7-6 7 3 6-8 8 2 3-10 7-1 3-9" fill="none" stroke="#000" stroke-width="1.300"/>
          <path d="M625 420L658 416L660 440L626 440Z" fill="#0d8a7c" stroke="#000"/>
          <path d="M635 437H645V478H635Z" fill="#16d0b8" stroke="#000"/>
          <path d="M667 516L684 522L682 527L665 521Z" fill="#8ffaff"/>
          <circle cx="641" cy="502" r="27" fill="#12dcc2" stroke="#000" stroke-width="1.200"/>
          <circle cx="641" cy="502" r="18.500" fill="#0d9686" stroke="#000" stroke-width="1.200"/>
          <path d="M623 506C630 498 650 498 659 506C657 515 650 521 641 521C632 521 625 515 623 506Z" fill="#12dcc2" stroke="#000"/>
          <path d="M650 484L638 520" stroke="#000"/>

          <!-- busy ring -->
          <circle cx="1079" cy="540" r="7" fill="none" stroke="#3f90f0" stroke-width="3.500"/>

          <!-- compass -->
          <path d="M1767 129L1790 117H1817L1828 127L1799 158Z" fill="#1d4a64" stroke="#c9c4ee" stroke-width="1.300"/>
          <path d="M1837 118L1800 158L1777 184M1829 127L1801 152" fill="none" stroke="#c9c4ee" stroke-width="1.300"/>
          <circle cx="1837" cy="118" r="3.500" fill="#d8d0f8"/>
          <path d="M1748 165L1753 164L1793 199L1792 207L1750 172Z" fill="#1a1650" stroke="#d8d0f8" stroke-width="1.300"/>
          <rect x="1769" y="184" width="9" height="9" fill="#c00018"/>
          <text x="1759" y="124" class="gz">x</text>
          <text x="1792" y="146" class="gz">y</text>

          <!-- axis triad -->
          <path d="M1829 945L1845 958L1862 943" fill="none" stroke="#fff"/>
          <text x="1828" y="942" class="ax">x</text>
          <text x="1844" y="954" class="ax">y</text>
          <text x="1860" y="942" class="ax">z</text>
        </svg>
        <span class="cut-label l1">lever</span>
        <span class="cut-label l2">2</span>
        <div class="card card-g"><span class="card-l">G</span><span class="card-x">x</span></div>
        <div class="card card-d1"><span class="card-l">D</span><span class="card-x">x</span></div>
        <div class="card card-d2"><span class="card-l">D</span><span class="card-x">x</span></div>
        <div class="card card-e"><span class="card-l">E</span><span class="card-x">x</span></div>
        <div class="card card-t"><span class="card-l">T</span><span class="card-x">x</span></div>
      </div>
    </section>

    <aside class="rightbar">
      <i class="rsep first"></i>
      <span class="rtool"><svg viewBox="0 0 26 26"><use href="#gear"/></svg></span>
      <i class="rsep tall"></i>
      <span class="rtool dd"><svg viewBox="0 0 26 26"><use href="#arw"/></svg></span>
      <i class="rsep"></i>
      <span class="rtool dd"><svg viewBox="0 0 26 26"><use href="#skt"/></svg></span>
      <i class="rsep"></i>
      <span class="rtool dd"><svg viewBox="0 0 26 26"><use href="#pad"/></svg></span>
      <span class="rtool dd"><svg viewBox="0 0 26 26"><use href="#pck"/></svg></span>
      <span class="rtool"><svg viewBox="0 0 26 26"><use href="#shf"/></svg></span>
      <span class="rtool"><svg viewBox="0 0 26 26"><use href="#rib"/></svg></span>
      <span class="rtool"><svg viewBox="0 0 26 26"><use href="#hol"/></svg></span>
      <span class="rtool"><svg viewBox="0 0 26 26"><use href="#rb1"/></svg></span>
      <span class="rtool"><svg viewBox="0 0 26 26"><use href="#rb2"/></svg></span>
      <span class="rtool dd"><svg viewBox="0 0 26 26"><use href="#mlt"/></svg></span>
      <span class="rtool"><svg viewBox="0 0 26 26"><use href="#lft"/></svg></span>
      <span class="rtool"><svg viewBox="0 0 26 26"><use href="#swp"/></svg></span>
      <i class="rsep"></i>
      <span class="rtool dd"><svg viewBox="0 0 26 26"><use href="#sf1"/></svg></span>
      <span class="rtool"><svg viewBox="0 0 26 26"><use href="#sf2"/></svg></span>
      <span class="rtool dd"><svg viewBox="0 0 26 26"><use href="#sf3"/></svg></span>
      <span class="rtool"><svg viewBox="0 0 26 26"><use href="#sf4"/></svg></span>
      <span class="rtool"><svg viewBox="0 0 26 26"><use href="#sf5"/></svg></span>
      <span class="rtool"><svg viewBox="0 0 26 26"><use href="#sf6"/></svg></span>
      <span class="rtool dd"><svg viewBox="0 0 26 26"><use href="#sf7"/></svg></span>
      <i class="rsep"></i>
      <span class="rtool dd"><svg viewBox="0 0 26 26"><use href="#sf8"/></svg></span>
      <i class="rsep"></i>
      <span class="rtool dd"><svg viewBox="0 0 26 26"><use href="#ga1"/></svg></span>
      <span class="rtool dd"><svg viewBox="0 0 26 26"><use href="#ga2"/></svg></span>
      <span class="rtool"><svg viewBox="0 0 26 26"><use href="#ga3"/></svg></span>
    </aside>
  </main>

  <div class="toolbar toolbar-bottom">
    <i class="handle"></i>
    <span class="tool"><svg viewBox="0 0 26 26"><use href="#new"/></svg></span>
    <span class="tool"><svg viewBox="0 0 26 26"><use href="#opn"/></svg></span>
    <span class="tool"><svg viewBox="0 0 26 26"><use href="#sav"/></svg></span>
    <span class="tool"><svg viewBox="0 0 26 26"><use href="#prt"/></svg></span>
    <span class="tool"><svg viewBox="0 0 26 26"><use href="#cut"/></svg></span>
    <span class="tool"><svg viewBox="0 0 26 26"><use href="#cpy"/></svg></span>
    <span class="tool"><svg viewBox="0 0 26 26"><use href="#pst"/></svg></span>
    <span class="tool dd"><svg viewBox="0 0 26 26"><use href="#und"/></svg></span>
    <span class="tool dd"><svg viewBox="0 0 26 26"><use href="#red"/></svg></span>
    <span class="tool"><svg viewBox="0 0 26 26"><use href="#wht"/></svg></span>
    <i class="handle"></i>
    <span class="tool"><svg viewBox="0 0 26 26"><use href="#fx"/></svg></span>
    <span class="tool"><svg viewBox="0 0 26 26"><use href="#bub"/></svg></span>
    <span class="tool"><svg viewBox="0 0 26 26"><use href="#pwn"/></svg></span>
    <span class="tool dd"><svg viewBox="0 0 26 26"><use href="#tbl"/></svg></span>
    <span class="tool"><svg viewBox="0 0 26 26"><use href="#tre"/></svg></span>
    <span class="tool dd"><svg viewBox="0 0 26 26"><use href="#lck"/></svg></span>
    <span class="tool"><svg viewBox="0 0 26 26"><use href="#frm"/></svg></span>
    <i class="handle"></i>
    <span class="tool"><svg viewBox="0 0 26 26"><use href="#pln"/></svg></span>
    <span class="tool"><svg viewBox="0 0 26 26"><use href="#fit"/></svg></span>
    <span class="tool"><svg viewBox="0 0 26 26"><use href="#pan"/></svg></span>
    <span class="tool"><svg viewBox="0 0 26 26"><use href="#rot"/></svg></span>
    <span class="tool"><svg viewBox="0 0 26 26"><use href="#zin"/></svg></span>
    <span class="tool"><svg viewBox="0 0 26 26"><use href="#zot"/></svg></span>
    <span class="tool"><svg viewBox="0 0 26 26"><use href="#nrm"/></svg></span>
    <span class="tool"><svg viewBox="0 0 26 26"><use href="#mul"/></svg></span>
    <span class="tool dd"><svg viewBox="0 0 26 26"><use href="#cub"/></svg></span>
    <span class="tool dd"><svg viewBox="0 0 26 26"><use href="#cyl"/></svg></span>
    <span class="tool"><svg viewBox="0 0 26 26"><use href="#rn1"/></svg></span>
    <span class="tool"><svg viewBox="0 0 26 26"><use href="#rn2"/></svg></span>
    <i class="handle"></i>
    <span class="tool"><svg viewBox="0 0 26 26"><use href="#mtl"/></svg></span>
    <i class="handle"></i>
    <span class="tool dd"><svg viewBox="0 0 26 26"><use href="#shp"/></svg></span>
    <span class="tool dd"><svg viewBox="0 0 26 26"><use href="#shq"/></svg></span>
    <i class="handle"></i>
    <span class="tool"><svg viewBox="0 0 26 26"><use href="#rul"/></svg></span>
    <span class="tool"><svg viewBox="0 0 26 26"><use href="#clm"/></svg></span>
    <span class="tool"><svg viewBox="0 0 26 26"><use href="#wgt"/></svg></span>
    <i class="handle"></i>
    <span class="tool"><svg viewBox="0 0 26 26"><use href="#kin"/></svg></span>
    <i class="handle"></i>
    <span class="tool"><svg viewBox="0 0 26 26"><use href="#cam"/></svg></span>
    <i class="handle"></i>
    <span class="tool"><svg viewBox="0 0 26 26"><use href="#upd"/></svg></span>
    <span class="tool"><svg viewBox="0 0 26 26"><use href="#hnd"/></svg></span>
    <span class="tool"><svg viewBox="0 0 26 26"><use href="#axi"/></svg></span>
    <span class="tool"><svg viewBox="0 0 26 26"><use href="#num"/></svg></span>
    <span class="tool dd"><svg viewBox="0 0 26 26"><use href="#dsp"/></svg></span>
    <span class="tool"><svg viewBox="0 0 26 26"><use href="#spc"/></svg></span>
    <span class="tool dd"><svg viewBox="0 0 26 26"><use href="#lay"/></svg></span>
    <span class="tool"><svg viewBox="0 0 26 26"><use href="#bok"/></svg></span>
    <div class="combo c177 grey"><span>lumbar support lever</span><svg class="chev" viewBox="0 0 10 6"><path d="M1 1l4 4 4-4" fill="none" stroke="#555"/></svg></div>
    <i class="handle after-combo"></i>
    <span class="tool"><svg viewBox="0 0 26 26"><use href="#edg"/></svg></span>
    <span class="tool"><svg viewBox="0 0 26 26"><use href="#cnt"/></svg></span>
    <span class="tool"><svg viewBox="0 0 26 26"><use href="#trg"/></svg></span>
    <span class="tool"><svg viewBox="0 0 26 26"><use href="#lyr"/></svg></span>
    <svg class="catia" viewBox="0 0 46 36"><text x="14" y="15" class="ds-3">3</text><text x="2" y="26" class="ds-d">D</text><text x="14" y="25" class="ds-s">S</text><text x="9" y="34" class="ds-c">CATIA</text></svg>
  </div>

  <footer class="status">
    <span class="status-text">Select an object or a command</span>
    <div class="status-input"></div>
    <span class="status-btn"><svg viewBox="0 0 14 14"><path d="M3 2h8v8H3zM1 12h12" fill="none" stroke="#999"/></svg></span>
    <span class="status-btn"><svg viewBox="0 0 14 14"><path d="M4 2h7v8H4zM1 12h12M6 6h3" fill="none" stroke="#999"/></svg></span>
  </footer>

  <div class="wm-cn">泥巴制造</div>
  <div class="wm-en">Made by Nider</div>
</div>
</body>
</html>
```
FILE: styles.css
```css
* { box-sizing: border-box; }
html, body { margin: 0; padding: 0; }
body { width: 1920px; height: 1048px; overflow: hidden; background: #f0f0f0; font-family: "Noto Sans CJK SC", "Noto Sans", sans-serif; color: #111; }
i { display: block; }
.defs { position: absolute; width: 0; height: 0; }

.app { position: relative; width: 1920px; height: 1048px; display: flex; flex-direction: column; overflow: hidden; }

/* title */
.title-bar { height: 23px; flex: none; display: flex; align-items: center; background: #fff; font-size: 12.800px; padding-left: 3px; }
.app-logo { width: 15px; height: 15px; margin-right: 5px; }
.title-text { white-space: nowrap; }
.win-btns { margin-left: auto; display: flex; gap: 33px; padding-right: 19px; }
.win-btns svg { width: 12px; height: 12px; display: block; }

/* menu */
.menu-bar { height: 19px; flex: none; display: flex; align-items: center; gap: 23.500px; background: #cdcbe4; font-size: 12.500px; line-height: 19px; }
.menu-logo { width: 19px; height: 15px; margin-right: -22px; align-self: flex-start; }
.menu-start { background: #fbdcb5; width: 51px; padding-left: 7px; margin-right: -17px; }
.mdi-btns { margin-left: auto; display: flex; gap: 2px; }
.mdi { width: 17px; height: 17px; background: #eeeef4; display: flex; align-items: center; justify-content: center; }
.mdi svg { width: 10px; height: 10px; }

/* toolbars */
.toolbar { flex: none; display: flex; align-items: center; background: linear-gradient(180deg, #f6f6fb 0%, #dcdbee 25%, #cdcbe4 55%, #a9a7c3 95%, #8c8aa6 100%); }
.toolbar-top { height: 39px; padding-left: 0; }
.toolbar-bottom { height: 39px; border-bottom: 1px solid #444; }
.toolbar-bottom .tool { padding-top: 3px; }
.handle { width: 2px; height: 20px; margin: 0 10px; background: #f7f7fc; border-radius: 1px; box-shadow: 1px 0 0 #a5a3bf; flex: none; align-self: flex-start; margin-top: 4px; }
.toolbar-top > .handle:first-child { margin: 4px 8px 0 7px; }
.toolbar-bottom > .handle:first-child { margin: 4px 7px 0 7px; }
.handle.after-combo { margin: 4px 6px 0 10px; }
.thin { width: 2px; height: 38px; margin: 0 2px; background: #f4f4fa; border-right: 1px solid #a5a3bf; flex: none; align-self: flex-start; }
.thin.w3 { margin: 0 3px 0 4px; }
.thin.w5 { margin: 0 4px 0 5px; }
.tool { position: relative; flex: none; width: 30px; height: 38px; display: flex; align-items: center; justify-content: center; }
.tool svg { width: 26px; height: 26px; display: block; }
.dd::after { content: ""; position: absolute; right: -1px; bottom: 4px; border: 4px solid transparent; border-top: 5px solid #000; border-bottom: 0; }

.combo { flex: none; height: 26px; background: #fff; border: 1px solid #9a98b4; margin-right: 3px; display: flex; align-items: center; justify-content: space-between; padding: 0 7px 0 5px; font-size: 12.500px; overflow: hidden; }
.combo .clip { width: 44px; overflow: hidden; white-space: nowrap; }
.combo.last { margin-right: 1px; }
.c68 { width: 68px; }
.c44 { width: 44px; }
.c42 { width: 42px; }
.c177 { width: 177px; margin: 0 0 0 2px; }
.grey { background: #e1e1e1; }
.off { background: #ececec; color: #999; }
.chev { width: 10px; height: 6px; flex: none; }

/* main */
.main { height: 906px; flex: none; display: flex; border-top: 1px solid #555; background: #f0f0f0; }

.left { position: relative; width: 181px; flex: none; display: grid; grid-template-columns: 151px 18px; grid-template-rows: 880px 18px; padding: 3px 0 0 3px; border-right: 2px solid #777; background: #f0f0f0; align-content: start; }
.tree { position: relative; overflow: hidden; background: linear-gradient(180deg, #3a3363 0, #433a6c 335px, #a5a2bd 601px, #4a4172 601px, #5e5684 680px, #a5a2bd 880px); padding: 0 0 0 1px; color: #fff; font-size: 17px; }
.tree-lines { position: absolute; left: 0; top: 0; width: 151px; height: 150px; }
.node { position: relative; height: 33px; display: flex; align-items: center; white-space: nowrap; }
.n-ic { flex: none; display: block; }
.n0 .n-ic { width: 26px; height: 26px; margin-right: 5px; }
.n1 { padding-left: 26px; }
.n1 .n-ic { width: 24px; height: 20px; margin-right: 4px; }
.n2 { padding-left: 46px; }
.n2 .n-ic { width: 28px; height: 26px; margin-right: 4px; }
.n3 { padding-left: 49px; }
.n3 .n-ic { width: 24px; height: 18px; margin-right: 4px; }
.sel { background: #0a5fe8; color: #fff; border-top: 1px solid #fff; border-left: 1px solid #fff; line-height: 23px; padding-right: 2px; box-shadow: 1px 1px 0 #555; }
.plain { line-height: 23px; }
.vscroll { display: flex; flex-direction: column; background: #f0f0f0; align-items: center; padding-top: 3px; border-right: 1px solid #fff; }
.vthumb { flex: 1; width: 100%; background: #cdcdcd; margin: 3px 0; }
.sarrow { width: 12px; height: 8px; margin: 3px 0 6px; flex: none; }
.hscroll { grid-column: 1 / span 2; display: flex; align-items: center; justify-content: space-between; padding: 0 4px; border-top: 1px solid #fff; border-bottom: 1px solid #888; }
.hthumb { width: 109px; height: 17px; background: #cdcdcd; }
.sarrow-h { width: 8px; height: 12px; }

.center { width: 1696px; flex: none; height: 899px; padding-left: 8px; border-bottom: 1px solid #000; border-right: 1px solid #000; }
.tabs { height: 34px; margin-left: -5px; padding-top: 3px; border-bottom: 1px solid #bbb; margin-right: 5px; background: #f0f0f0; }
.tab { display: block; width: 67px; height: 27px; line-height: 25px; padding-left: 11px; font-size: 12.500px; border-right: 1px solid #000; }
.canvas { position: relative; width: 1682px; height: 859px; overflow: hidden; box-shadow: 0 0 0 1px #aaa; background: linear-gradient(180deg, #3a3363 0, #483f71 524px, #5a5283 604px, #a6a4bf 859px); }
.scene { position: absolute; left: 0; top: 0; width: 1682px; height: 859px; }
.gz { font: 13px "Noto Sans", sans-serif; fill: #f4e840; }
.ax { font: 11px "Noto Sans", sans-serif; fill: #fff; }
.cut-label { position: absolute; left: 0; color: #fff; font-size: 16px; line-height: 20px; }
.l1 { top: 106px; }
.l2 { top: 138px; left: 3px; }

.card { position: absolute; background: #fff; border-top: 1px solid #6bb8d8; box-shadow: 0 4px 22px rgba(0, 0, 0, .22); width: 38px; }
.card-l { position: absolute; left: 8px; top: 4px; font-size: 13px; line-height: 18px; }
.card-x { position: absolute; right: 1px; top: 7px; width: 19px; height: 19px; background: #c13a50; color: #fff; font-size: 10px; font-weight: 700; line-height: 18px; text-align: center; }
.card-g { left: 1484px; top: 106px; height: 140px; }
.card-d1 { left: 1391px; top: 223px; height: 137px; }
.card-d2 { left: 1583px; top: 267px; height: 179px; }
.card-e { left: 1579px; top: 511px; width: 36px; height: 133px; }
.card-t { left: 1588px; top: 684px; width: 36px; height: 72px; }

.rightbar { flex: 1; display: flex; flex-direction: column; align-items: center; padding-left: 3px; background: linear-gradient(90deg, #f2f2f8 0, #d8d6ea 25%, #cdcbe4 80%, #bab8d4 100%); }
.rtool { position: relative; flex: none; width: 30px; height: 30px; display: flex; align-items: center; justify-content: center; }
.rtool svg { width: 26px; height: 26px; display: block; }
.rtool.dd::after { right: -3px; bottom: 0; }
.rsep { flex: none; height: 20px; width: 18px; position: relative; }
.rsep::before { content: ""; position: absolute; left: 0; right: 0; top: 9px; height: 2px; background: #f7f7fc; box-shadow: 0 -1px 0 #a5a3bf; }
.rsep.first { height: 10px; }
.rsep.first::before { top: 4px; }
.rsep.tall { height: 26px; }
.rsep.tall::before { top: 14px; }

/* status */
.status { flex: 1; display: flex; align-items: center; background: #cdcbe4; font-size: 13px; padding-right: 2px; }
.status-text { padding-left: 4px; }
.status-input { margin-left: auto; width: 299px; height: 21px; background: #fff; align-self: flex-end; }
.status-btn { width: 31px; height: 21px; margin-left: 2px; background: #e8e8ee; align-self: flex-end; display: flex; align-items: center; justify-content: center; }
.status-btn svg { width: 14px; height: 14px; }

/* svg text */
.qm { font: 700 15px "Liberation Sans", sans-serif; fill: #1010c0; }
.qm.big { font-size: 20px; fill: #06068a; }
.fx { font: italic 700 22px "Liberation Serif", serif; fill: #000; }
.fx2 { font: 700 10px "Liberation Sans", sans-serif; fill: #000; }
.nm { font: 700 10px "Liberation Sans", sans-serif; fill: #000; }
.nmb { fill: #1a20c0; }
.catia { width: 46px; height: 36px; flex: none; margin-left: 12px; }
.ds-3, .ds-s { font: italic 700 16px "Liberation Serif", serif; fill: #d02020; }
.ds-d { font: italic 700 15px "Liberation Serif", serif; fill: #1a2aa0; }
.ds-c { font: italic 700 9.500px "Liberation Sans", sans-serif; fill: #1a2aa0; }

/* watermark */
.wm-cn { position: absolute; left: 1488px; top: 868px; font-size: 70px; font-weight: 900; letter-spacing: 12px; line-height: 84px; white-space: nowrap; color: transparent; background: radial-gradient(circle at 3px 3px, #ec3a52 0, #ec3a52 1.500px, transparent 3.500px) 0 0 / 9px 9px, linear-gradient(180deg, #d4122e 0, #c80f2a 65%, #7a0a1e 100%); -webkit-background-clip: text; background-clip: text; filter: drop-shadow(2px 2px 0 #6a0a1c); }
.wm-en { position: absolute; left: 1470px; top: 962px; font-family: "DejaVu Sans", sans-serif; font-size: 23px; font-weight: 700; letter-spacing: 5.500px; line-height: 28px; color: #b81028; -webkit-text-stroke: 1.200px #b81028; text-shadow: 1px 1px 0 #6a0a1c; white-space: nowrap; transform: scaleX(1.350); transform-origin: left center; }
```
